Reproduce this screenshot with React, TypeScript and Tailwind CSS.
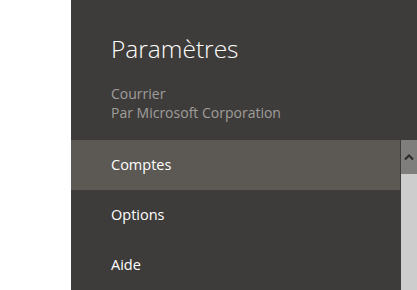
import React from 'react';

const items = ['Comptes', 'Options', 'Aide'];

export default function App() {
  return (
    <div className="flex h-[290px] w-[417px] overflow-hidden bg-white" style={{ fontFamily: '"Open Sans", "Noto Sans", sans-serif' }}>
      <div className="w-[71px] shrink-0 bg-white" />
      <div className="flex flex-1 flex-col bg-[#3e3c3a]">
        <div className="h-[140px] shrink-0 pl-[40px] pt-[33px]">
          <h1 className="text-[24.5px] font-light leading-[32px] text-white">Paramètres</h1>
          <div className="mt-[19px] text-[14px] leading-[19px] text-[#a09e9b]">
            <div>Courrier</div>
            <div>Par Microsoft Corporation</div>
          </div>
        </div>
        <div className="flex flex-1">
          <ul className="flex-1">
            {items.map((it, i) => (
              <li
                key={it}
                className={`flex h-[50px] items-center pl-[40px] text-[14.5px] text-white ${i === 0 ? 'bg-[#5c5854]' : ''}`}
              >
                {it}
              </li>
            ))}
          </ul>
          <div className="flex w-[17px] flex-col border-l border-[#3e3c3a] bg-[#cdcdcd]">
            <div className="flex h-[34px] items-center justify-center bg-[#7f7e7c]">
              <svg width="10" height="6" viewBox="0 0 10 6">
                <path d="M1 5.5 L5 1.5 L9 5.5" fill="none" stroke="#2a2a2a" strokeWidth="2" />
              </svg>
            </div>
          </div>
        </div>
      </div>
    </div>
  );
}
